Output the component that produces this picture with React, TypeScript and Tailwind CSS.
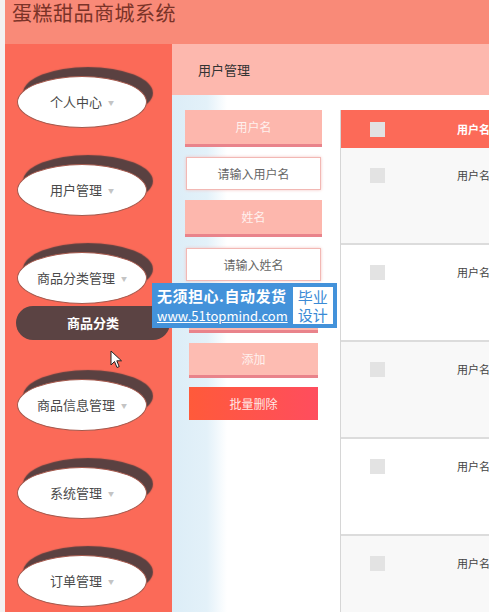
import React from "react";

const FONT = { fontFamily: "'Noto Sans CJK SC', 'Noto Sans', sans-serif" };

const MENU = ["个人中心", "用户管理", "商品分类管理", "商品信息管理", "系统管理", "订单管理"];

function MenuOval({ label }: { label: string }) {
  return (
    <div className="ml-[12px] w-[130px] h-[52px] rounded-[50%] bg-white border border-[#a4594d] shadow-[6px_-9px_1px_#5a4141] flex items-center justify-center gap-[6px] text-[13px] text-[#4a4a4a]">
      <span>{label}</span>
      <span className="text-[6px] text-[#c4c4c4] mt-[1px]">▼</span>
    </div>
  );
}

function FormLabel({ text }: { text: string }) {
  return (
    <div className="h-[37px] bg-[#fdb7ad] border-b-[3px] border-[#e9838b] flex items-center justify-center text-[12px] text-[#fff1ee]">
      {text}
    </div>
  );
}

function FormInput({ placeholder }: { placeholder: string }) {
  return (
    <div className="mx-[1px] h-[33px] bg-white border border-[#f2b8b4] shadow-[0_0_3px_#f3c5c2] flex items-center justify-center text-[12px] text-[#666]">
      {placeholder}
    </div>
  );
}

export default function App() {
  const rows = [0, 1, 2, 3, 4];
  return (
    <div className="w-[489px] h-[612px] overflow-hidden flex bg-white relative" style={FONT}>
      <div className="w-[5px] flex-shrink-0 bg-[#f3f1f1]" />
      <div className="flex-1 flex flex-col min-w-0">
        {/* Header */}
        <div className="h-[44px] flex-shrink-0 bg-[#f98a78] flex items-start pl-[7px]">
          <h1 className="text-[20px] leading-[26px] text-[#7a3328] tracking-[0.5px]">蛋糕甜品商城系统</h1>
        </div>

        <div className="flex-1 flex min-h-0">
          {/* Sidebar */}
          <div className="w-[167px] flex-shrink-0 bg-[#fb6a58] flex flex-col pt-[32px]">
            <MenuOval label={MENU[0]} />
            <div className="h-[36px]" />
            <MenuOval label={MENU[1]} />
            <div className="h-[36px]" />
            <MenuOval label={MENU[2]} />
            <div className="ml-[11px] mt-[2px] w-[154px] h-[34px] rounded-full bg-[#5b4343] flex items-center justify-center text-[13px] font-bold text-white">
              商品分类
            </div>
            <div className="h-[39px]" />
            <MenuOval label={MENU[3]} />
            <div className="h-[36px]" />
            <MenuOval label={MENU[4]} />
            <div className="h-[36px]" />
            <MenuOval label={MENU[5]} />
          </div>

          {/* Content */}
          <div className="flex-1 flex flex-col min-w-0">
            <div className="h-[51px] flex-shrink-0 bg-[#fdb8ae] flex items-center pl-[26px] text-[13px] text-[#333]">
              用户管理
            </div>
            <div className="flex-1 flex gap-[18px] pt-[15px] pl-[13px] bg-[linear-gradient(90deg,#dcedf7_0px,#e3f1f9_35px,#ffffff_55px)]">
              {/* Form column */}
              <div className="w-[137px] flex-shrink-0 flex flex-col">
                <FormLabel text="用户名" />
                <div className="h-[10px]" />
                <FormInput placeholder="请输入用户名" />
                <div className="h-[10px]" />
                <FormLabel text="姓名" />
                <div className="h-[11px]" />
                <FormInput placeholder="请输入姓名" />
                <div className="h-[9px]" />
                <div className="mx-[4px] h-[43px] bg-[#fdb7ad] border-b-[3px] border-[#e9838b]" />
                <div className="h-[10px]" />
                <div className="mx-[4px] h-[35px] bg-[#fdbcb2] border-b-[3px] border-[#e9838b] flex items-center justify-center text-[12px] text-[#fff1ee]">
                  添加
                </div>
                <div className="h-[9px]" />
                <div className="mx-[4px] h-[33px] bg-[linear-gradient(90deg,#ff5a3a,#ff4d5e)] flex items-center justify-center text-[12px] text-[#ffe9e6]">
                  批量删除
                </div>
              </div>

              {/* Table */}
              <div className="flex-1 min-w-0 overflow-hidden border-l border-[#d6d6d6] flex flex-col">
                <div className="h-[38px] flex-shrink-0 bg-[#fc6a58] flex items-center">
                  <div className="w-[116px] flex-shrink-0 pl-[29px]">
                    <div className="w-[15px] h-[15px] bg-[#e2e2e2]" />
                  </div>
                  <span className="text-[11px] font-bold text-white whitespace-nowrap">用户名</span>
                </div>
                {rows.map((r) => (
                  <div
                    key={r}
                    className={`h-[97px] flex-shrink-0 flex items-start border-b-2 border-[#dcdcdc] ${r % 2 === 0 ? "bg-[#f8f8f8]" : "bg-white"}`}
                  >
                    <div className="w-[116px] flex-shrink-0 pl-[29px] pt-[20px]">
                      <div className="w-[15px] h-[15px] bg-[#e3e3e3]" />
                    </div>
                    <span className="pt-[19px] text-[11px] text-[#444] whitespace-nowrap">用户名</span>
                  </div>
                ))}
              </div>
            </div>
          </div>
        </div>
      </div>

      {/* Watermark overlay */}
      <div className="absolute left-[152px] top-[283px] h-[45px] flex items-stretch bg-[#4392da] pl-[5px] pr-[2px] py-[2px] gap-[3px]">
        <div className="flex flex-col justify-center text-white">
          <span className="text-[15px] leading-[20px] font-bold tracking-[0.5px] whitespace-nowrap">无须担心.自动发货</span>
          <span className="text-[13px] leading-[19px] underline whitespace-nowrap">www.51topmind.com</span>
        </div>
        <div className="w-[44px] bg-white border-2 border-[#4392da] flex flex-col items-center justify-center text-[15px] leading-[18px] text-[#3a8ad5]">
          <span>毕业</span>
          <span>设计</span>
        </div>
      </div>

      {/* Cursor */}
      <svg className="absolute left-[110px] top-[350px]" width="13" height="19" viewBox="0 0 13 19">
        <path d="M1 1 L1 15 L4.5 11.5 L7 17.5 L9.2 16.6 L6.8 10.8 L11.5 10.8 Z" fill="#fff" stroke="#222" strokeWidth="1" strokeLinejoin="round" />
      </svg>
    </div>
  );
}
